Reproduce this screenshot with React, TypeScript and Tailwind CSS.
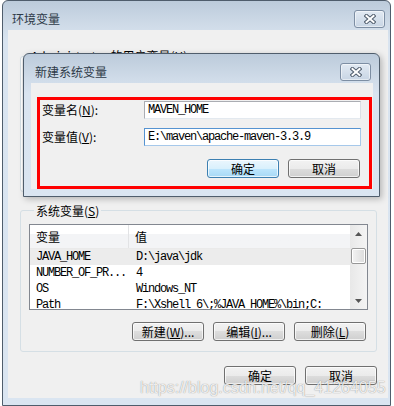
import React from "react";

const cjk = "font-['Noto_Sans_CJK_SC',sans-serif]";
const mono =
  "font-['Liberation_Mono','Noto_Sans_CJK_SC',monospace] text-[12px] tracking-[-1.2px]";

const frameBg =
  "bg-[linear-gradient(to_bottom,#bccbdb_0px,#cfdbe8_24px,#d9e4f0_40px,#dae5f1_100%)]";

const CloseX = () => (
  <svg width="12" height="10" viewBox="0 0 12 10">
    <path d="M2.5 2 L9.5 8 M9.5 2 L2.5 8" stroke="#505d6d" strokeWidth="4" strokeLinecap="square" />
    <path d="M2.5 2 L9.5 8 M9.5 2 L2.5 8" stroke="#ffffff" strokeWidth="2" strokeLinecap="square" />
  </svg>
);

const CloseButton = () => (
  <div className="flex h-[18px] w-[31px] items-center justify-center rounded-[3px] border border-[#7d8ea3] bg-linear-to-b from-[#e2eaf3] to-[#c8d5e4] shadow-[inset_0_0_0_1px_rgba(255,255,255,0.5)]">
    <CloseX />
  </div>
);

interface BtnProps {
  children: React.ReactNode;
  primary?: boolean;
}

const WinButton = ({ children, primary }: BtnProps) => (
  <div
    className={`flex h-[19px] w-[72px] items-center justify-center rounded-[3px] border text-[12px] leading-none text-black shadow-[inset_0_0_0_1px_rgba(255,255,255,0.7)] ${
      primary
        ? "border-[#3c7fb1] bg-[linear-gradient(to_bottom,#eaf6fd_0%,#d9f0fc_50%,#bee6fd_50%,#a7d9f5_100%)]"
        : "border-[#707070] bg-[linear-gradient(to_bottom,#f2f2f2_0%,#ebebeb_50%,#dddddd_50%,#cfcfcf_100%)]"
    }`}
  >
    {children}
  </div>
);

const rows = [
  ["JAVA_HOME", "D:\\java\\jdk"],
  ["NUMBER_OF_PR...", "4"],
  ["OS", "Windows_NT"],
  ["Path", "F:\\Xshell 6\\;%JAVA_HOME%\\bin;C:"],
];

export default function App() {
  return (
    <div className={`relative h-[406px] w-[394px] overflow-hidden bg-white ${cjk} text-[12px] text-black`}>
      {/* OUTER WINDOW */}
      <div className={`ml-[2px] flex h-[406px] w-[389px] flex-col rounded-t-[6px] border border-[#4f5d6c] ${frameBg}`}>
        <div className="flex h-[29px] items-start justify-between pl-[9px] pr-[5px] pt-[9px]">
          <div className="leading-[17px] text-[#2e3a48]">环境变量</div>
          <CloseButton />
        </div>
        <div className="ml-[5px] mr-[2px] flex h-[368px] flex-col bg-[#f0f0f0] pl-[12px] pr-[11px] pt-[20px]">
          {/* user vars (mostly hidden) */}
          <fieldset className="h-[142px] rounded-[3px] border border-[#d5dfe5] shadow-[inset_1px_1px_0_#fff]">
            <legend className="ml-[8px] px-[2px] leading-[12px]">
              Administrator 的用户变量(<span className="underline">U</span>)
            </legend>
          </fieldset>

          {/* system vars */}
          <fieldset className="mt-[12px] rounded-[3px] border border-[#d5dfe5] pb-[10px] pl-[8px] pr-[8px]">
            <legend className="ml-[5px] px-[2px] leading-[13px]">
              系统变量(<span className="underline">S</span>)
            </legend>
            <div className="mt-[7px] flex h-[86px] border border-[#828790] bg-white">
              <div className="flex flex-1 flex-col overflow-hidden">
                <div className="flex h-[24px] shrink-0 border-b border-[#eaeaea] bg-linear-to-b from-white from-40% to-[#f3f4f6] to-40%">
                  <div className="flex w-[99px] items-center border-r border-[#e2e3e5] pl-[6px]">变量</div>
                  <div className="flex items-center pl-[6px]">值</div>
                </div>
                {rows.map(([k, v], i) => (
                  <div
                    key={k}
                    className={`flex h-[16px] shrink-0 items-center whitespace-nowrap ${mono} ${
                      i === 0 ? "bg-[#ececec]" : ""
                    }`}
                  >
                    <div className="w-[100px] pl-[6px]">{k}</div>
                    <div className="pl-[6px]">{v}</div>
                  </div>
                ))}
              </div>
              {/* scrollbar */}
              <div className="flex w-[17px] flex-col bg-linear-to-r from-[#e8e8e8] to-[#f4f4f4]">
                <div className="flex h-[17px] items-center justify-center">
                  <svg width="7" height="4" viewBox="0 0 7 4">
                    <path d="M0 4 L3.5 0 L7 4 Z" fill="#555" />
                  </svg>
                </div>
                <div className="flex-1 px-[1px] pt-[6px]">
                  <div className="h-[16px] rounded-[2px] border border-[#979797] bg-linear-to-r from-[#f3f3f3] to-[#dcdcdc] shadow-[inset_0_0_0_1px_#fff]" />
                </div>
                <div className="flex h-[17px] items-center justify-center">
                  <svg width="7" height="4" viewBox="0 0 7 4">
                    <path d="M0 0 L3.5 4 L7 0 Z" fill="#555" />
                  </svg>
                </div>
              </div>
            </div>
            <div className="mr-[2px] mt-[12px] flex justify-end gap-[9px]">
              <WinButton>
                新建(<span className="underline">W</span>)...
              </WinButton>
              <WinButton>
                编辑(<span className="underline">I</span>)...
              </WinButton>
              <WinButton>
                删除(<span className="underline">L</span>)
              </WinButton>
            </div>
          </fieldset>

          <div className="mt-[14px] flex justify-end gap-[9px]">
            <WinButton>确定</WinButton>
            <WinButton>取消</WinButton>
          </div>
        </div>
      </div>

      {/* INNER DIALOG: 新建系统变量 */}
      <div
        className={`absolute left-[23px] top-[53px] flex h-[144px] w-[357px] flex-col rounded-t-[6px] border border-[#4f5d6c] shadow-[2px_2px_6px_rgba(0,0,0,0.25)] ${frameBg}`}
      >
        <div className="flex h-[29px] items-start justify-between pl-[11px] pr-[8px] pt-[9px]">
          <div className="leading-[17px] text-[#2e3a48]">新建系统变量</div>
          <CloseButton />
        </div>
        <div className="ml-[7px] mr-[6px] h-[106px] bg-[#f0f0f0] pl-[6px] pt-[14px]">
          <div className="h-[92px] w-[335px] border-[3px] border-[#ff0000] pr-[8px]">
            <div className="mt-[1px] flex items-center">
              <div className="w-[104px] pl-[2px]">
                变量名(<span className="underline">N</span>):
              </div>
              <div className={`flex h-[18px] flex-1 items-center border border-[#abadb3] border-b-[#e3e9ef] border-r-[#dbdfe6] bg-white pl-[3px] ${mono}`}>
                MAVEN_HOME
              </div>
            </div>
            <div className="mt-[9px] flex items-center">
              <div className="w-[104px] pl-[2px]">
                变量值(<span className="underline">V</span>):
              </div>
              <div className={`flex h-[18px] flex-1 items-center border border-[#5593d1] border-b-[#a6c8ea] border-r-[#a6c8ea] bg-white pl-[3px] ${mono}`}>
                E:\maven\apache-maven-3.3.9
              </div>
            </div>
            <div className="mt-[13px] flex justify-end gap-[9px] pr-[1px]">
              <WinButton primary>确定</WinButton>
              <WinButton>取消</WinButton>
            </div>
          </div>
        </div>
      </div>

      {/* watermark */}
      <div className="pointer-events-none absolute left-[140px] top-[378px] font-['Liberation_Sans',sans-serif] text-[16px] leading-[20px] text-white/85 [text-shadow:0_0_1px_rgba(0,0,0,0.5)]">
        https://blog.csdn.net/qq_41264055
      </div>
    </div>
  );
}
